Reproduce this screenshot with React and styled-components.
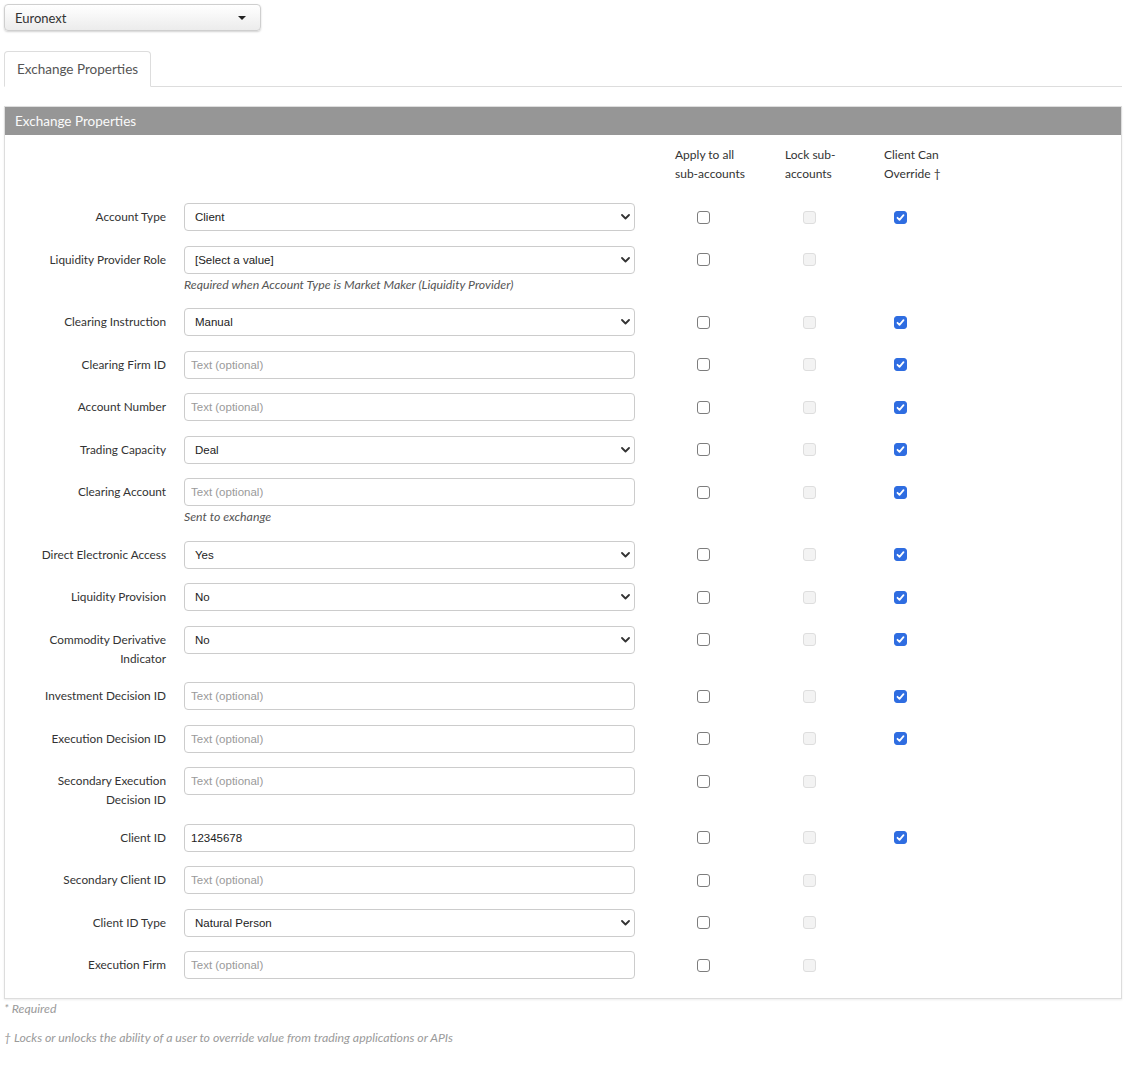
import React from 'react'
import styled, { createGlobalStyle } from 'styled-components'

const GlobalStyle = createGlobalStyle`
  body {
    margin: 0;
    background: #fff;
    color: #333;
    font-family: Lato, "Liberation Sans", sans-serif;
  }
`

// widths and checkbox offsets of the three flag columns
const columns = [
  { key: 'apply', width: 110, offset: 22, title: ['Apply to all', 'sub-accounts'] },
  { key: 'lock', width: 99, offset: 18, title: ['Lock sub-', 'accounts'] },
  { key: 'override', width: 100, offset: 10, title: ['Client Can', 'Override †'] },
]

const fields = [
  { label: 'Account Type', kind: 'select', value: 'Client', override: true },
  { label: 'Liquidity Provider Role', kind: 'select', value: '[Select a value]', help: 'Required when Account Type is Market Maker (Liquidity Provider)' },
  { label: 'Clearing Instruction', kind: 'select', value: 'Manual', override: true },
  { label: 'Clearing Firm ID', kind: 'text', override: true },
  { label: 'Account Number', kind: 'text', override: true },
  { label: 'Trading Capacity', kind: 'select', value: 'Deal', override: true },
  { label: 'Clearing Account', kind: 'text', help: 'Sent to exchange', override: true },
  { label: 'Direct Electronic Access', kind: 'select', value: 'Yes', override: true },
  { label: 'Liquidity Provision', kind: 'select', value: 'No', override: true },
  { label: 'Commodity Derivative Indicator', kind: 'select', value: 'No', override: true },
  { label: 'Investment Decision ID', kind: 'text', override: true },
  { label: 'Execution Decision ID', kind: 'text', override: true },
  { label: 'Secondary Execution Decision ID', kind: 'text' },
  { label: 'Client ID', kind: 'text', value: '12345678', override: true },
  { label: 'Secondary Client ID', kind: 'text' },
  { label: 'Client ID Type', kind: 'select', value: 'Natural Person' },
  { label: 'Execution Firm', kind: 'text' },
]

const Page = styled.div`
  padding: 4px;
  width: 1118px;
`

const ExchangePicker = styled.div`
  width: 257px;
  height: 27px;
  box-sizing: border-box;
  display: flex;
  align-items: center;
  justify-content: space-between;
  padding: 0 10px 0 10px;
  border: 1px solid #cfcfcf;
  border-radius: 4px;
  background: linear-gradient(#ffffff, #ececec);
  box-shadow: 0 1px 2px rgba(0, 0, 0, 0.18);
  font-size: 13px;
  color: #333;
`

const Caret = styled.span`
  width: 0;
  height: 0;
  margin-right: 4px;
  border-left: 4px solid transparent;
  border-right: 4px solid transparent;
  border-top: 4px solid #222;
`

const TabBar = styled.div`
  display: flex;
  margin-top: 20px;
  border-bottom: 1px solid #dddddd;
`

const Tab = styled.div`
  height: 36px;
  box-sizing: border-box;
  display: flex;
  align-items: center;
  padding: 0 12px;
  margin-bottom: -1px;
  border: 1px solid #dddddd;
  border-bottom-color: #fff;
  border-radius: 4px 4px 0 0;
  background: #fff;
  font-size: 13.5px;
  color: #555;
`

const Panel = styled.section`
  margin-top: 19px;
  border: 1px solid #dddddd;
  box-shadow: 0 1px 2px rgba(0, 0, 0, 0.08);
`

const PanelHeader = styled.header`
  height: 28px;
  display: flex;
  align-items: center;
  padding: 0 10px;
  background: #969696;
  color: #fafafa;
  font-size: 13.5px;
`

const PanelBody = styled.div`
  padding: 10px 0 5px;
`

const Row = styled.div`
  display: flex;
  align-items: flex-start;
  margin-bottom: ${p => p.$gap}px;
`

const Label = styled.label`
  width: 161px;
  box-sizing: border-box;
  padding: 4px 0 0 15px;
  margin-right: 18px;
  text-align: right;
  font-size: 11.8px;
  line-height: 19px;
  color: #333;
`

const Field = styled.div`
  width: 451px;
`

const Control = styled.div`
  position: relative;
`

const TextInput = styled.input`
  width: 100%;
  height: 28px;
  box-sizing: border-box;
  padding: 0 6px;
  border: 1px solid #cccccc;
  border-radius: 4px;
  background: #fff;
  font-family: "Liberation Sans", Arial, sans-serif;
  font-size: 11.5px;
  color: #222;
  outline: none;

  &::placeholder {
    color: #9a9a9a;
  }
`

const Select = styled.select`
  width: 100%;
  height: 28px;
  box-sizing: border-box;
  padding: 0 10px;
  border: 1px solid #cccccc;
  border-radius: 4px;
  background: #fff;
  appearance: none;
  font-family: "Liberation Sans", Arial, sans-serif;
  font-size: 11.5px;
  color: #222;
  outline: none;
`

const Chevron = styled.svg`
  position: absolute;
  right: 5px;
  top: 11px;
  pointer-events: none;
`

const Help = styled.div`
  padding-top: 1px;
  font-size: 12.3px;
  line-height: 19px;
  font-style: italic;
  color: #555;
`

const Flags = styled.div`
  display: flex;
  margin-left: 40px;
`

const FlagCell = styled.div`
  width: ${p => p.$width}px;
  height: 28px;
  box-sizing: border-box;
  display: flex;
  align-items: center;
  padding-left: ${p => p.$offset}px;
`

const HeadCell = styled.div`
  width: ${p => p.$width}px;
  font-size: 12px;
  line-height: 19px;
  color: #333;
`

const Box = styled.span`
  width: 13px;
  height: 13px;
  box-sizing: border-box;
  display: flex;
  align-items: center;
  justify-content: center;
  border-radius: 3px;
  border: 1px solid ${p => (p.$checked ? '#2f6de1' : p.$disabled ? '#dedede' : '#7d7d7d')};
  background: ${p => (p.$checked ? '#2f6de1' : p.$disabled ? '#f3f3f3' : '#fff')};
`

const Notes = styled.div`
  font-size: 12.3px;
  line-height: 19px;
  font-style: italic;
  color: #9a9a9a;
`

const Note = styled.p`
  margin: 0 0 10px;
`

const Checkbox = ({ checked, disabled }) => (
  <Box $checked={checked} $disabled={disabled}>
    {checked && (
      <svg width="9" height="9" viewBox="0 0 9 9">
        <path d="M1.5 4.8l2 2 4-4.6" fill="none" stroke="#fff" strokeWidth="1.8" strokeLinecap="round" strokeLinejoin="round" />
      </svg>
    )}
  </Box>
)

const FieldRow = ({ field, last }) => {
  const flags = { apply: 'plain', lock: 'disabled', override: field.override ? 'checked' : null }

  return (
    <Row $gap={last ? 14 : 14.5}>
      <Label>{field.label}</Label>
      <Field>
        <Control>
          {field.kind === 'select' ? (
            <>
              <Select defaultValue={field.value}>
                <option>{field.value}</option>
              </Select>
              <Chevron width="9" height="6" viewBox="0 0 9 6">
                <path d="M1 1l3.5 3.5L8 1" fill="none" stroke="#333" strokeWidth="1.8" strokeLinecap="round" strokeLinejoin="round" />
              </Chevron>
            </>
          ) : (
            <TextInput placeholder="Text (optional)" defaultValue={field.value} />
          )}
        </Control>
        {field.help && <Help>{field.help}</Help>}
      </Field>
      <Flags>
        {columns.map(col => (
          <FlagCell key={col.key} $width={col.width} $offset={col.offset}>
            {flags[col.key] && (
              <Checkbox checked={flags[col.key] === 'checked'} disabled={flags[col.key] === 'disabled'} />
            )}
          </FlagCell>
        ))}
      </Flags>
    </Row>
  )
}

const App = () => (
  <Page>
    <GlobalStyle />
    <ExchangePicker>
      Euronext
      <Caret />
    </ExchangePicker>

    <TabBar>
      <Tab>Exchange Properties</Tab>
    </TabBar>

    <Panel>
      <PanelHeader>Exchange Properties</PanelHeader>
      <PanelBody>
        <Row $gap={20}>
          <Label as="div" />
          <Field />
          <Flags>
            {columns.map(col => (
              <HeadCell key={col.key} $width={col.width}>
                {col.title[0]}
                <br />
                {col.title[1]}
              </HeadCell>
            ))}
          </Flags>
        </Row>
        {fields.map((field, i) => (
          <FieldRow key={field.label} field={field} last={i === fields.length - 1} />
        ))}
      </PanelBody>
    </Panel>

    <Notes>
      <Note>* Required</Note>
      <Note>† Locks or unlocks the ability of a user to override value from trading applications or APIs</Note>
    </Notes>
  </Page>
)

export default App
